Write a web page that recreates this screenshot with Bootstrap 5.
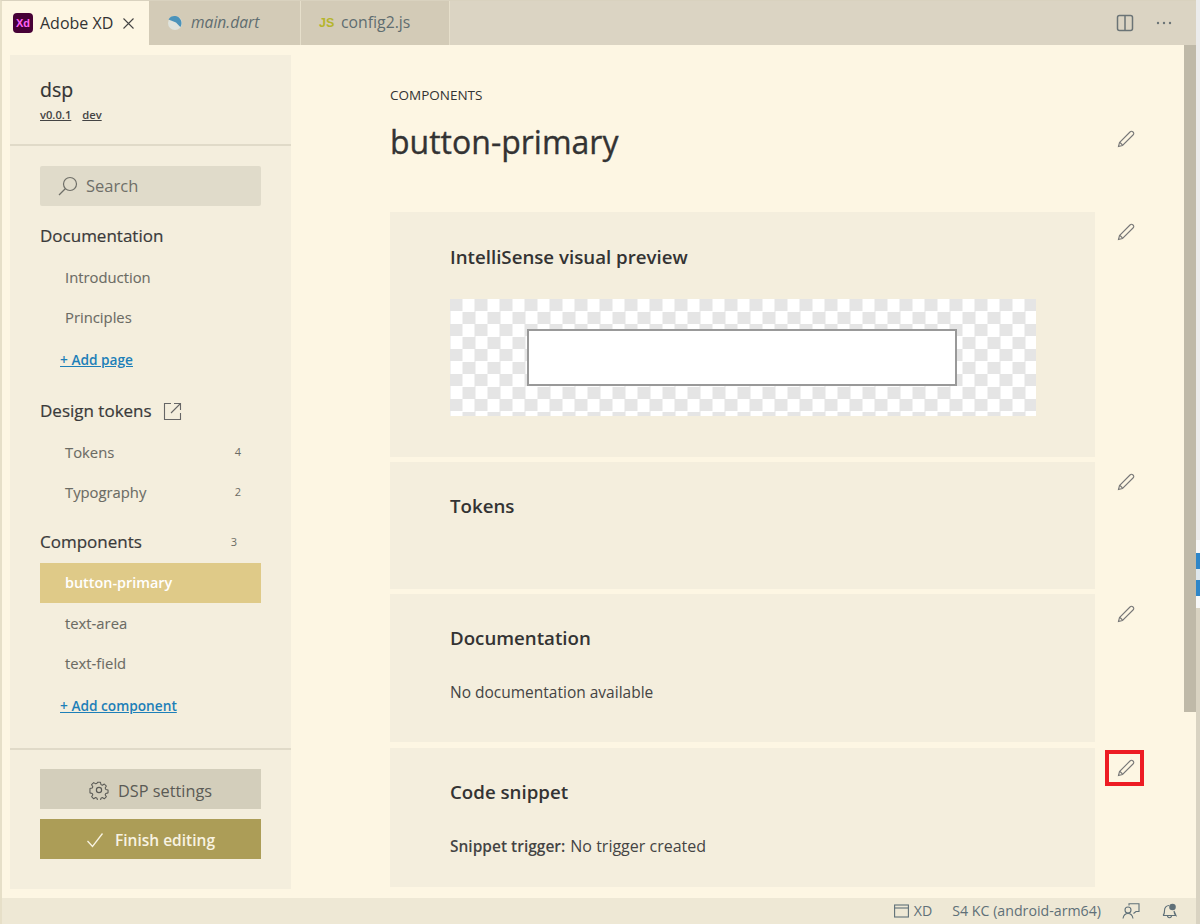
<!DOCTYPE html>
<html lang="en"><head><meta charset="utf-8"><title>Adobe XD</title>
<link href="https://cdn.jsdelivr.net/npm/bootstrap@5.3.0/dist/css/bootstrap.min.css" rel="stylesheet">
<style>
html,body{height:100%;}
body{background:#fdf6e3;font-family:"Open Sans","Noto Sans","Liberation Sans",sans-serif;color:#333;overflow:hidden;}
.win{height:924px;width:1196px;flex:none;border-left:2px solid #e6dfc8;border-top:1px solid #d9d2bf;}
.backwin{width:4px;flex:none;height:924px;background:#d9d3c2;}
.bw-a{height:540px;background:#ececec;}
.bw-b{height:13px;background:#f8f8f8;}
.bw-c{height:16px;background:#2f86c8;}
.bw-d{height:11px;background:#dfe8ee;}
.bw-e{height:16px;background:#2f86c8;}
.bw-f{height:12px;background:#f8f8f8;}
.tabbar{height:44px;background:#dbd4c3;flex:none;}
.tabx{height:44px;font-size:16px;border-right:1px solid #e6dfcb;}
.tabx-on{width:147px;padding-left:11px;background:#fdf6e3;color:#333;border-right:0;gap:7px;}
.tabx-off{background:#d3cbb7;color:#5f6d70;padding-left:18px;gap:8px;}
.tabx-dart{width:152px;font-size:15.6px;}
.tabx-js{width:149px;font-size:15.8px;}
.closex{margin-left:2px;}
.xdlogo{width:20px;height:20px;border-radius:4px;background:#470137;color:#ff61f6;font-size:11px;font-weight:700;line-height:20px;text-align:center;font-family:"Liberation Sans",sans-serif;}
.jsmark{color:#b5b52c;font-size:12.5px;font-weight:700;font-family:"Liberation Sans",sans-serif;width:14px;}
.actions{padding-right:23px;gap:21px;}
.body-row{height:853px;flex:none;}
.sidex{width:281px;flex:none;margin:10px 0 9px 8px;background:#f4eedd;}
.headx{height:91px;padding:22px 0 0 30px;border-bottom:2px solid #e0dac8;}
.brand{font-size:19.5px;line-height:26px;-webkit-text-stroke:.2px #333;}
.vers{font-size:11.2px;font-weight:600;line-height:14px;margin-top:5px;}
.vers span{text-decoration:underline;margin-right:11px;color:#444;}
.navx{padding:20px 30px 0;flex:1 1 auto;}
.searchx{height:40px;background:#e0dbca;border-radius:2px;padding-left:18px;color:#6f6f68;font-size:16.5px;margin-bottom:15px;}
.grp{font-size:17px;height:30px;line-height:30px;color:#3a3a3a;margin-bottom:6px;-webkit-text-stroke:.2px #3a3a3a;}
.grp-ico{gap:11px;}
.itemx{height:40px;padding:0 20px 0 25px;font-size:14.8px;color:#6b6b64;-webkit-text-stroke:.1px #6b6b64;}
.cnt{font-size:11px;color:#6b6b64;font-weight:400;-webkit-text-stroke:0;}
.itemx-on{background:#dfca88;color:#fff;font-weight:600;-webkit-text-stroke:0;font-size:14.4px;}
.addx{height:44px;padding:2px 0 0 20px;font-size:13.7px;font-weight:600;}
.addx a{color:#1d7fb8;}
.grp-wrap{margin-bottom:15px;}
.foot{height:141px;border-top:2px solid #e0dac8;padding:19px 30px 0;}
.btnx{height:40px;border-radius:0;border:0;width:100%;padding-top:8px;padding-bottom:4px;}
.btnx svg{margin-top:-3px;}
.btnx-sec{background:#d3cebb;color:#5a5a55;margin-bottom:10px;font-size:16.3px;gap:9px;--bs-btn-hover-bg:#d3cebb;}
.btnx-pri{background:#ac9d57;color:#f8f3e2;font-weight:600;font-size:15.5px;gap:11px;--bs-btn-hover-bg:#ac9d57;}
.mainx{padding:0 0 0 99px;flex:1 1 auto;min-width:0;}
.eyebrow{font-size:13.5px;line-height:18px;margin-top:41px;}
.titlex{font-size:32px;font-weight:400;line-height:44px;margin-top:16px;color:#333;margin-bottom:0;-webkit-text-stroke:.35px #333;}
.rowx{width:754px;flex:none;}
.panel{width:705px;background:#f4eedd;padding:29px 60px 0;flex:none;}
.panel h2{font-size:18.7px;font-weight:600;line-height:30px;margin:0;color:#333;}
.p1{height:245px;margin-top:48px;margin-bottom:5px;padding-top:30px;}
.p2{height:127px;margin-bottom:5px;}
.p3{height:148px;margin-bottom:6px;}
.p4{height:139px;}
.copy{font-size:15.5px;line-height:22px;margin-top:28px;color:#444;}
.copy b{font-weight:600;margin-right:1px;}
.copy span{font-size:16px;}
.checker{height:117px;width:586px;margin-top:27px;background-color:#fff;background-image:conic-gradient(#e5e5e5 25%,#fff 25% 50%,#e5e5e5 50% 75%,#fff 75%);background-size:25px 25px;background-position:12.5px 0;}
.swatch{width:430px;height:57px;background:#fff;border:2px solid #999;margin-right:2px;}
.penbtn{width:39px;height:36px;margin-left:10px;margin-top:2px;flex:none;padding-left:2px;}
.pen-top{margin-left:auto;margin-top:76px;}
.pen-p1{margin-top:50px;}
.penred{border:4px solid #ed1c24;padding-left:0;}
.penred svg{margin-left:2px;}
.scrollx{width:12px;background:#bfb9a8;height:667px;flex:none;margin-left:auto;}
.statusx{height:26px;flex:none;background:#eee8d5;font-size:14.2px;color:#5f7078;padding-right:19px;}
.st-item{gap:5px;margin-right:21px;}
.st-xd{margin-right:20px;}
.st-icons{gap:22px;}
svg{display:block;flex:none;}
</style></head>
<body class="d-flex">
<div class="win d-flex flex-column">
 <div class="tabbar d-flex">
  <div class="tabx tabx-on d-flex align-items-center">
   <span class="xdlogo">Xd</span><span>Adobe XD</span>
   <svg class="closex" width="13" height="13" viewBox="0 0 13 13" fill="none" stroke="#444" stroke-width="1.1"><path d="M1.500 1.500l10 10M11.500 1.500l-10 10"/></svg>
  </div>
  <div class="tabx tabx-off tabx-dart d-flex align-items-center">
   <svg width="16" height="16" viewBox="0 0 16 16"><circle cx="8" cy="8" r="7" fill="#dfe3dc"/><path d="M1.500 4.500C3 1.500 6 .5 8.500 1c3.500.6 6 3.500 6 7 0 1.500-.4 3-1.200 4L9 7.500z" fill="#4b93ba"/></svg>
   <em>main.dart</em>
  </div>
  <div class="tabx tabx-off tabx-js d-flex align-items-center">
   <span class="jsmark">JS</span><span>config2.js</span>
  </div>
  <div class="actions ms-auto d-flex align-items-center">
   <svg width="18" height="18" viewBox="0 0 18 18" fill="none" stroke="#6b7476" stroke-width="1.5"><rect x="1.500" y="1.500" width="15" height="15" rx="2"/><path d="M9 1.500v15"/></svg>
   <svg width="18" height="18" viewBox="0 0 18 18" fill="#6b7476"><circle cx="3" cy="9" r="1.200"/><circle cx="9" cy="9" r="1.200"/><circle cx="15" cy="9" r="1.200"/></svg>
  </div>
 </div>
 <div class="body-row d-flex">
  <aside class="sidex d-flex flex-column">
   <div class="headx"><div class="brand">dsp</div><div class="vers"><span>v0.0.1</span><span>dev</span></div></div>
   <div class="navx">
    <div class="searchx d-flex align-items-center gap-2">
     <svg width="20" height="20" viewBox="0 0 20 20" fill="none" stroke="#6f6f68" stroke-width="1.200"><circle cx="12" cy="8" r="6.500"/><path d="M7.500 12.500L1 19"/></svg><span>Search</span>
    </div>
    <div class="grp-wrap"><div class="grp">Documentation</div>
     <div class="itemx d-flex align-items-center">Introduction</div>
     <div class="itemx d-flex align-items-center">Principles</div>
     <div class="addx d-flex align-items-center"><a href="#">+ Add page</a></div>
    </div>
    <div class="grp-wrap"><div class="grp grp-ico d-flex align-items-center">Design tokens
      <svg width="19" height="19" viewBox="0 0 19 19" fill="none" stroke="#666" stroke-width="1.100"><path d="M8 1.500H1.500v16h16V11M11 1.500h6.500V8M17.500 1.500L8 11"/></svg></div>
     <div class="itemx d-flex align-items-center justify-content-between">Tokens<span class="cnt">4</span></div>
     <div class="itemx d-flex align-items-center justify-content-between">Typography<span class="cnt">2</span></div>
    </div>
    <div><div class="grp d-flex align-items-center justify-content-between pe-4">Components<span class="cnt ps-1">3</span></div>
     <div class="itemx itemx-on d-flex align-items-center">button-primary</div>
     <div class="itemx d-flex align-items-center">text-area</div>
     <div class="itemx d-flex align-items-center">text-field</div>
     <div class="addx d-flex align-items-center"><a href="#">+ Add component</a></div>
    </div>
   </div>
   <div class="foot">
    <button class="btn btnx btnx-sec d-flex align-items-center justify-content-center">
     <svg width="20" height="20" viewBox="0 0 20 20" fill="none" stroke="#5a5a55" stroke-width="1.200" stroke-linejoin="round"><path d="M8.300 1.200h3.400l.6 2.600 1.500.7 2.300-1.400 2.400 2.400-1.400 2.300.7 1.500 2.600.6v3.400l-2.600.6-.7 1.500 1.400 2.300-2.400 2.400-2.300-1.400-1.500.7-.6 2.600H8.300l-.6-2.600-1.500-.7-2.300 1.400-2.400-2.400 1.400-2.300-.7-1.500-2.600-.6V8.300l2.600-.6.7-1.500-1.400-2.300 2.400-2.400 2.300 1.400 1.500-.7z" transform="translate(1.300 1.300) scale(.87)"/><circle cx="10" cy="10" r="2.600"/></svg>DSP settings</button>
    <button class="btn btnx btnx-pri d-flex align-items-center justify-content-center">
     <svg width="18" height="18" viewBox="0 0 18 18" fill="none" stroke="#f8f3e2" stroke-width="1.300"><path d="M1.500 10l5 5.500L16.500 2.500"/></svg>Finish editing</button>
   </div>
  </aside>
  <main class="mainx d-flex">
   <div class="rowx">
    <div class="d-flex"><div><div class="eyebrow">COMPONENTS</div><h1 class="titlex">button-primary</h1></div>
     <div class="penbtn pen-top d-flex align-items-center justify-content-center"><svg width="18" height="18" viewBox="0 0 18 18" fill="none" stroke="#777" stroke-width="1.100"><path d="M1.500 16.500l1-4L13 2c1-1 2-1 3 0s1 2 0 3L5.500 15.500z"/><path d="M3 12.500l2.500 2.500"/></svg></div>
    </div>
    <div class="d-flex"><section class="panel p1"><h2>IntelliSense visual preview</h2>
      <div class="checker d-flex align-items-center justify-content-center"><div class="swatch"></div></div></section>
     <div class="penbtn pen-p1 d-flex align-items-center justify-content-center"><svg width="18" height="18" viewBox="0 0 18 18" fill="none" stroke="#777" stroke-width="1.100"><path d="M1.500 16.500l1-4L13 2c1-1 2-1 3 0s1 2 0 3L5.500 15.500z"/><path d="M3 12.500l2.500 2.500"/></svg></div></div>
    <div class="d-flex"><section class="panel p2"><h2>Tokens</h2></section>
     <div class="penbtn d-flex align-items-center justify-content-center"><svg width="18" height="18" viewBox="0 0 18 18" fill="none" stroke="#777" stroke-width="1.100"><path d="M1.500 16.500l1-4L13 2c1-1 2-1 3 0s1 2 0 3L5.500 15.500z"/><path d="M3 12.500l2.500 2.500"/></svg></div></div>
    <div class="d-flex"><section class="panel p3"><h2>Documentation</h2><p class="copy">No documentation available</p></section>
     <div class="penbtn d-flex align-items-center justify-content-center"><svg width="18" height="18" viewBox="0 0 18 18" fill="none" stroke="#777" stroke-width="1.100"><path d="M1.500 16.500l1-4L13 2c1-1 2-1 3 0s1 2 0 3L5.500 15.500z"/><path d="M3 12.500l2.500 2.500"/></svg></div></div>
    <div class="d-flex"><section class="panel p4"><h2>Code snippet</h2><p class="copy"><b>Snippet trigger:</b> <span>No trigger created</span></p></section>
     <div class="penbtn penred d-flex align-items-center justify-content-center"><svg width="18" height="18" viewBox="0 0 18 18" fill="none" stroke="#777" stroke-width="1.100"><path d="M1.500 16.500l1-4L13 2c1-1 2-1 3 0s1 2 0 3L5.500 15.500z"/><path d="M3 12.500l2.500 2.500"/></svg></div></div>
   </div>
   <div class="scrollx"></div>
  </main>
 </div>
 <div class="statusx d-flex align-items-center justify-content-end">
  <div class="st-item st-xd d-flex align-items-center">
   <svg width="15" height="14" viewBox="0 0 15 14" fill="none" stroke="#5f7078" stroke-width="1.100"><rect x=".6" y="1" width="13.800" height="12"/><path d="M.6 4h13.800"/></svg><span>XD</span>
  </div>
  <div class="st-item"><span>S4 KC (android-arm64)</span></div>
  <div class="st-icons d-flex align-items-center">
   <svg width="18" height="16" viewBox="0 0 18 16" fill="none" stroke="#5f7078" stroke-width="1.100"><circle cx="6" cy="7" r="3"/><path d="M1 15.500c.5-3 2.500-5 5-5s4.500 2 5 5M7 2.500V.8h10v7.700h-3l-2.500 2"/></svg>
   <svg width="15" height="16" viewBox="0 0 15 16" fill="none" stroke="#5f7078" stroke-width="1.100"><path d="M1 12.500c1.500-1 1.500-3 1.500-5 0-3 2-5 4.500-5M12 8c0 2 .3 3.500 2 4.500zM1 12.500h13M5.500 12.500c0 3 4 3 4 0"/><circle cx="10.500" cy="4" r="3.300" fill="#5f7078" stroke="none"/></svg>
  </div>
 </div>
</div>
<div class="backwin">
 <div class="bw-a"></div><div class="bw-b"></div><div class="bw-c"></div><div class="bw-d"></div><div class="bw-e"></div><div class="bw-f"></div>
</div>
<script src="https://cdn.jsdelivr.net/npm/bootstrap@5.3.0/dist/js/bootstrap.bundle.min.js"></script>
</body></html>
